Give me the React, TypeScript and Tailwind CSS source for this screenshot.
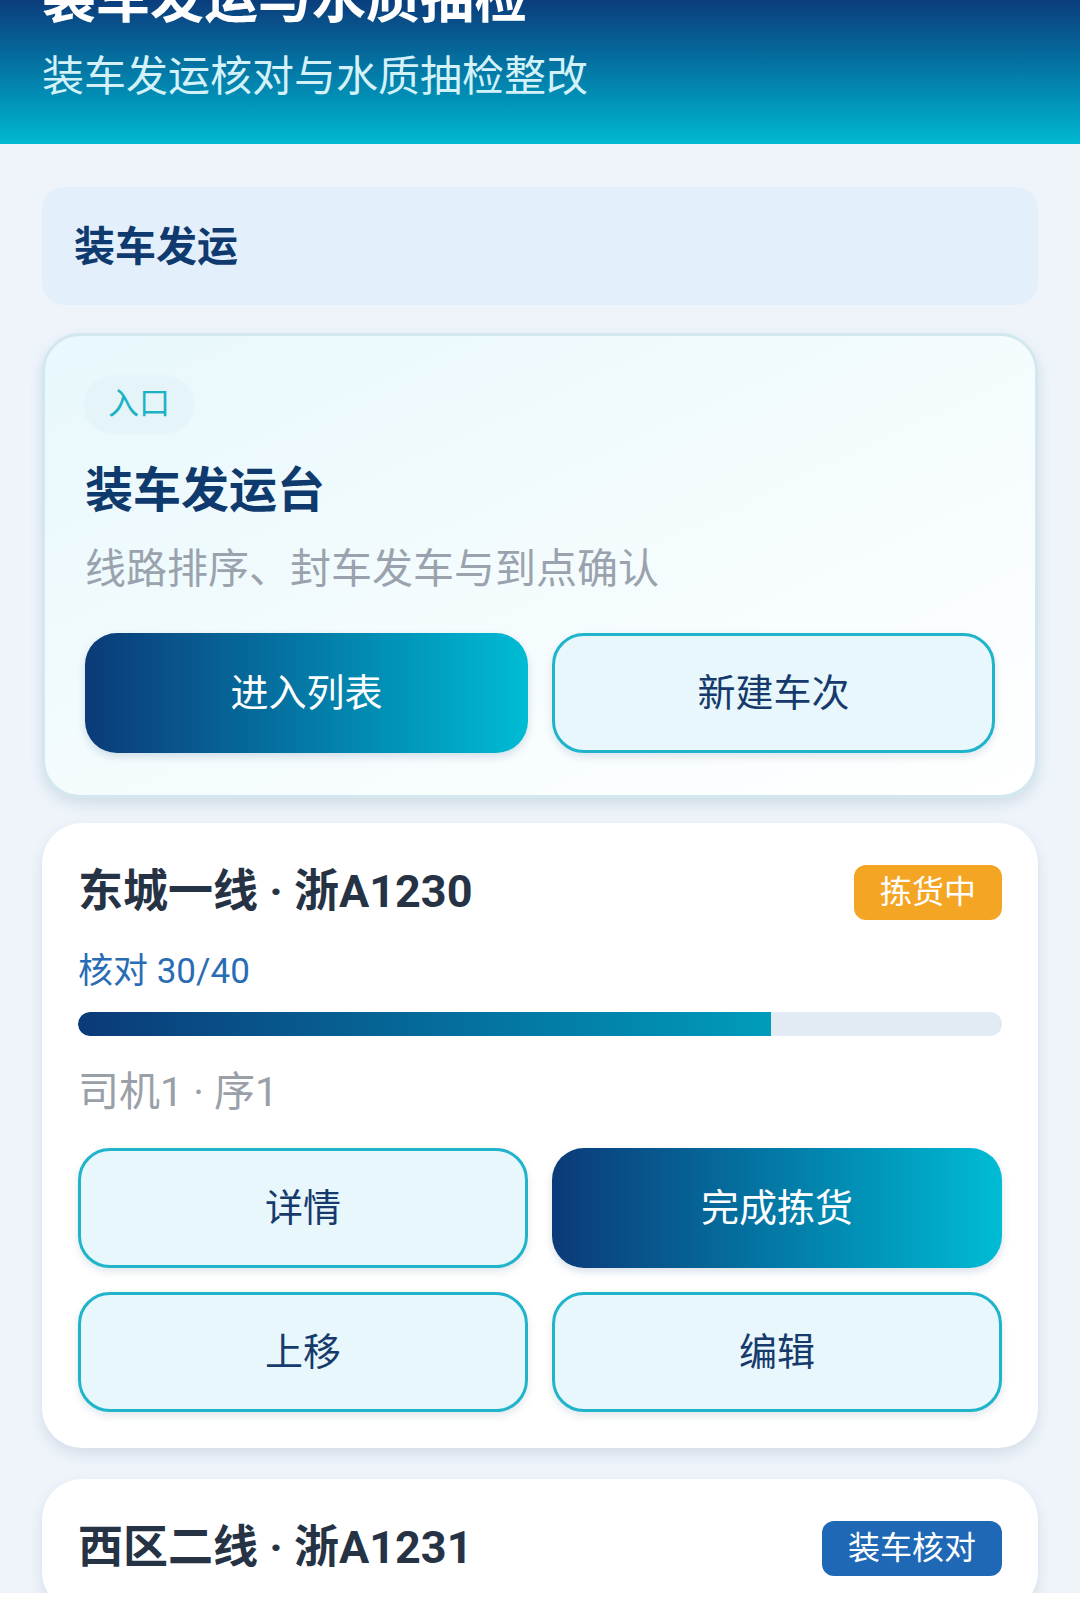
import React from "react";

const FONT = { fontFamily: "Roboto, 'Noto Sans CJK SC', sans-serif" };

interface Trip {
  id: string;
  title: string;
  status: string;
  statusClass: string;
  checked?: number;
  total?: number;
  meta?: string;
}

const trips: Trip[] = [
  {
    id: "t1",
    title: "东城一线 · 浙A1230",
    status: "拣货中",
    statusClass: "bg-[#f5a524]",
    checked: 30,
    total: 40,
    meta: "司机1 · 序1",
  },
  {
    id: "t2",
    title: "西区二线 · 浙A1231",
    status: "装车核对",
    statusClass: "bg-[#1f68b5]",
  },
];

const primaryBtn =
  "h-[120px] rounded-[32px] bg-gradient-to-r from-[#0b3a78] to-[#00bcd4] text-white text-[38px] flex items-center justify-center shadow-[0_4px_8px_rgba(10,60,110,0.15)]";
const outlineBtn =
  "h-[120px] rounded-[32px] bg-[#e8f7fc] border-[3px] border-[#1fb4c9] text-[#163a6c] text-[38px] flex items-center justify-center shadow-[0_4px_8px_rgba(10,60,110,0.12)]";

function TripCard({ trip }: { trip: Trip }) {
  const pct = trip.total ? (trip.checked! / trip.total) * 100 : 0;
  return (
    <div className="bg-white rounded-[40px] px-[36px] pt-[41px] pb-[36px] shadow-[0_6px_14px_rgba(30,60,100,0.12)]">
      <div className="flex items-center justify-between">
        <h3 className="text-[45px] leading-[56px] font-bold text-[#263345]">
          {trip.title}
        </h3>
        <span
          className={`${trip.statusClass} h-[55px] px-[26px] rounded-[12px] text-white text-[32px] flex items-center`}
        >
          {trip.status}
        </span>
      </div>
      {trip.total && (
        <>
          <p className="mt-[30px] text-[35px] leading-[44px] text-[#2a6cb4]">
            核对 {trip.checked}/{trip.total}
          </p>
          <div className="mt-[18px] h-[24px] rounded-full bg-[#e2ebf3] overflow-hidden">
            <div
              className="h-full rounded-l-full bg-gradient-to-r from-[#0b3a78] to-[#009cbb]"
              style={{ width: `${pct}%` }}
            />
          </div>
          <p className="mt-[31px] text-[41px] leading-[50px] text-[#9aa0a8]">
            {trip.meta}
          </p>
          <div className="mt-[31px] grid grid-cols-2 gap-x-[24px] gap-y-[24px]">
            <button className={outlineBtn}>详情</button>
            <button className={primaryBtn}>完成拣货</button>
            <button className={outlineBtn}>上移</button>
            <button className={outlineBtn}>编辑</button>
          </div>
        </>
      )}
    </div>
  );
}

export default function App() {
  return (
    <div className="min-h-screen bg-[#eef4fa] pb-[40px]" style={FONT}>
      <div className="h-[144px] bg-gradient-to-b from-[#0b3d7c] to-[#00b9d1] px-[42px] overflow-hidden">
        <h1 className="mt-[-27px] text-[54px] leading-[54px] font-bold text-white">
          装车发运与水质抽检
        </h1>
        <p className="mt-[29px] text-[42px] leading-[42px] text-[#d3f1f8]">
          装车发运核对与水质抽检整改
        </p>
      </div>

      <div className="px-[42px] pt-[43px] flex flex-col">
        <div className="h-[118px] rounded-[22px] bg-[#e3f0fc] flex items-center px-[32px] pt-[3px]">
          <h2 className="text-[41px] font-bold text-[#0f3a70]">装车发运</h2>
        </div>

        {/* entry card */}
        <div className="mt-[28px] rounded-[38px] border-[3px] border-[#d3e8ee] bg-gradient-to-br from-[#e8f8fc] to-white px-[40px] pt-[40px] pb-[42px] shadow-[0_6px_14px_rgba(30,80,110,0.14)]">
          <span className="inline-flex h-[56px] items-center px-[23px] rounded-full bg-[#e4f4f9] text-[#1cb2c6] text-[31px] shadow-[0_1px_4px_rgba(30,120,150,0.06)]">
            入口
          </span>
          <h2 className="mt-[30px] text-[48px] leading-[58px] font-bold text-[#0f3a6e]">
            装车发运台
          </h2>
          <p className="mt-[23px] text-[41px] leading-[52px] text-[#9aa3ad]">
            线路排序、封车发车与到点确认
          </p>
          <div className="mt-[38px] grid grid-cols-2 gap-[24px]">
            <button className={primaryBtn}>进入列表</button>
            <button className={outlineBtn}>新建车次</button>
          </div>
        </div>

        <div className="mt-[25px] flex flex-col gap-[31px]">
          {trips.map((t) => (
            <TripCard key={t.id} trip={t} />
          ))}
        </div>
      </div>

      <div className="fixed bottom-0 left-0 right-0 h-[20px] bg-white" />
    </div>
  );
}
